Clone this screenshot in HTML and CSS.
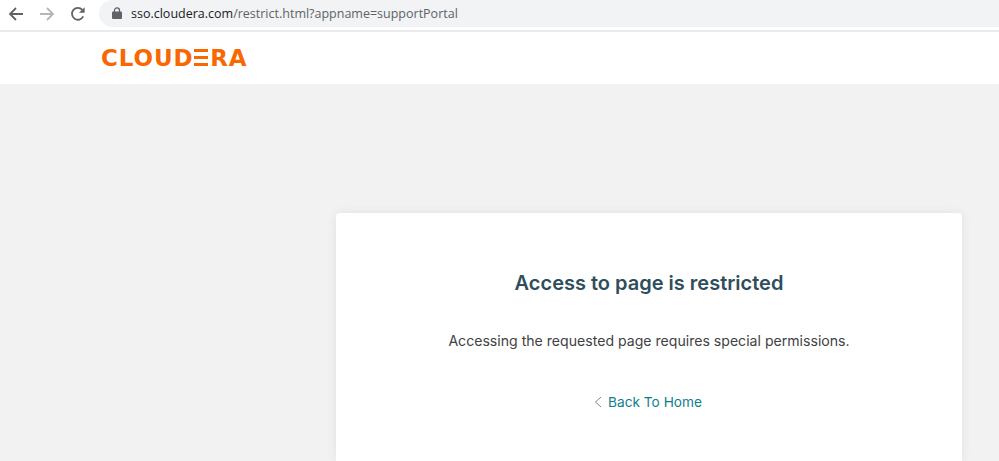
FILE: index.html
```html
<!DOCTYPE html>
<html lang="en">
<head>
<meta charset="UTF-8">
<title>Access to page is restricted</title>
<link rel="stylesheet" href="styles.css">
</head>
<body>
<div class="toolbar">
	<svg class="nav-icon" width="16" height="16" viewBox="0 0 16 16"><path d="M15 8H2M8 2L2 8l6 6" fill="none" stroke="#5f6368" stroke-width="1.8"/></svg>
	<svg class="nav-icon" width="16" height="16" viewBox="0 0 16 16"><path d="M1 8h13M8 2l6 6-6 6" fill="none" stroke="#b4b6b9" stroke-width="1.8"/></svg>
	<svg class="nav-icon" width="16" height="16" viewBox="0 0 16 16"><path d="M13.2 10.4A5.9 5.9 0 1 1 12.3 3.9" fill="none" stroke="#5f6368" stroke-width="1.8"/><path d="M14.6 1.2v5.6H9z" fill="#5f6368"/></svg>
	<div class="omnibox">
		<svg width="10" height="12" viewBox="0 0 10 12"><path d="M2.5 5V3.4a2.5 2.5 0 0 1 5 0V5" fill="none" stroke="#5f6368" stroke-width="1.3"/><rect y="4.6" width="10" height="7.4" rx="1" fill="#5f6368"/></svg>
		<span class="url"><span class="url-host">sso.cloudera.com</span>/restrict.html?appname=supportPortal</span>
	</div>
</div>
<header class="site-header">
	<div class="logo">CLOUD<span class="logo-e">E</span>RA</div>
</header>
<main class="content">
	<section class="card">
		<h1>Access to page is restricted</h1>
		<p>Accessing the requested page requires special permissions.</p>
		<a class="back" href="#">
			<svg width="8" height="12" viewBox="0 0 8 12"><path d="M7 1L1.5 6 7 11" fill="none" stroke="#7d8a90" stroke-width="1"/></svg>
			Back To Home
		</a>
	</section>
</main>
</body>
</html>
```

FILE: styles.css
```css
html, body {
	height: 100%;
}

body {
	margin: 0;
	display: flex;
	flex-direction: column;
	overflow: hidden;
	background-color: #f2f2f2;
	font-family: Inter, "Noto Sans", sans-serif;
}

.toolbar {
	display: flex;
	align-items: center;
	height: 27px;
	flex: none;
	background-color: #fff;
	border-bottom: 2px solid #e9eaed;
	padding: 0 0 3px 8px;
	gap: 15px;
}

.omnibox {
	display: flex;
	align-items: center;
	flex: 1;
	gap: 9px;
	height: 27px;
	margin-left: -2px;
	padding-left: 13px;
	margin-top: -1px;
	background-color: #f1f3f4;
	border-radius: 14px 0 0 14px;
}

.url {
	font-family: "Open Sans", sans-serif;
	font-size: 12.5px;
	color: #5f6368;
}

.url-host {
	color: #202124;
}

.site-header {
	flex: none;
	height: 52px;
	background-color: #fff;
	padding-left: 101px;
	display: flex;
	align-items: center;
}

.logo {
	font-family: "DejaVu Sans", sans-serif;
	font-weight: 700;
	font-size: 23px;
	letter-spacing: 0.9px;
	color: #f96702;
	line-height: 1;
}

/* the logo's E has no upright, just three bars */
.logo-e {
	color: transparent;
	background: linear-gradient(#f96702 0 3px, transparent 3px 7px, #f96702 7px 10px, transparent 10px 14px, #f96702 14px 17px) left center / 14px 17px no-repeat;
}

.content {
	flex: 1;
	display: flex;
	padding: 129px 37px 0 336px;
}

.card {
	flex: 1;
	box-sizing: border-box;
	padding-top: 57px;
	background-color: #fff;
	border-radius: 4px 4px 0 0;
	box-shadow: 0 0 12px rgba(0, 0, 0, 0.07);
	text-align: center;
}

h1 {
	margin: 0;
	font-size: 20px;
	line-height: 26px;
	font-weight: 600;
	color: #2f4e5c;
}

p {
	margin: 34px 0 0;
	font-size: 14.1px;
	line-height: 22px;
	color: #3f4144;
}

.back {
	display: inline-flex;
	align-items: center;
	gap: 6px;
	margin-top: 39px;
	padding-right: 2px;
	font-size: 13.7px;
	line-height: 22px;
	color: #0f7f8c;
	text-decoration: none;
}
```
